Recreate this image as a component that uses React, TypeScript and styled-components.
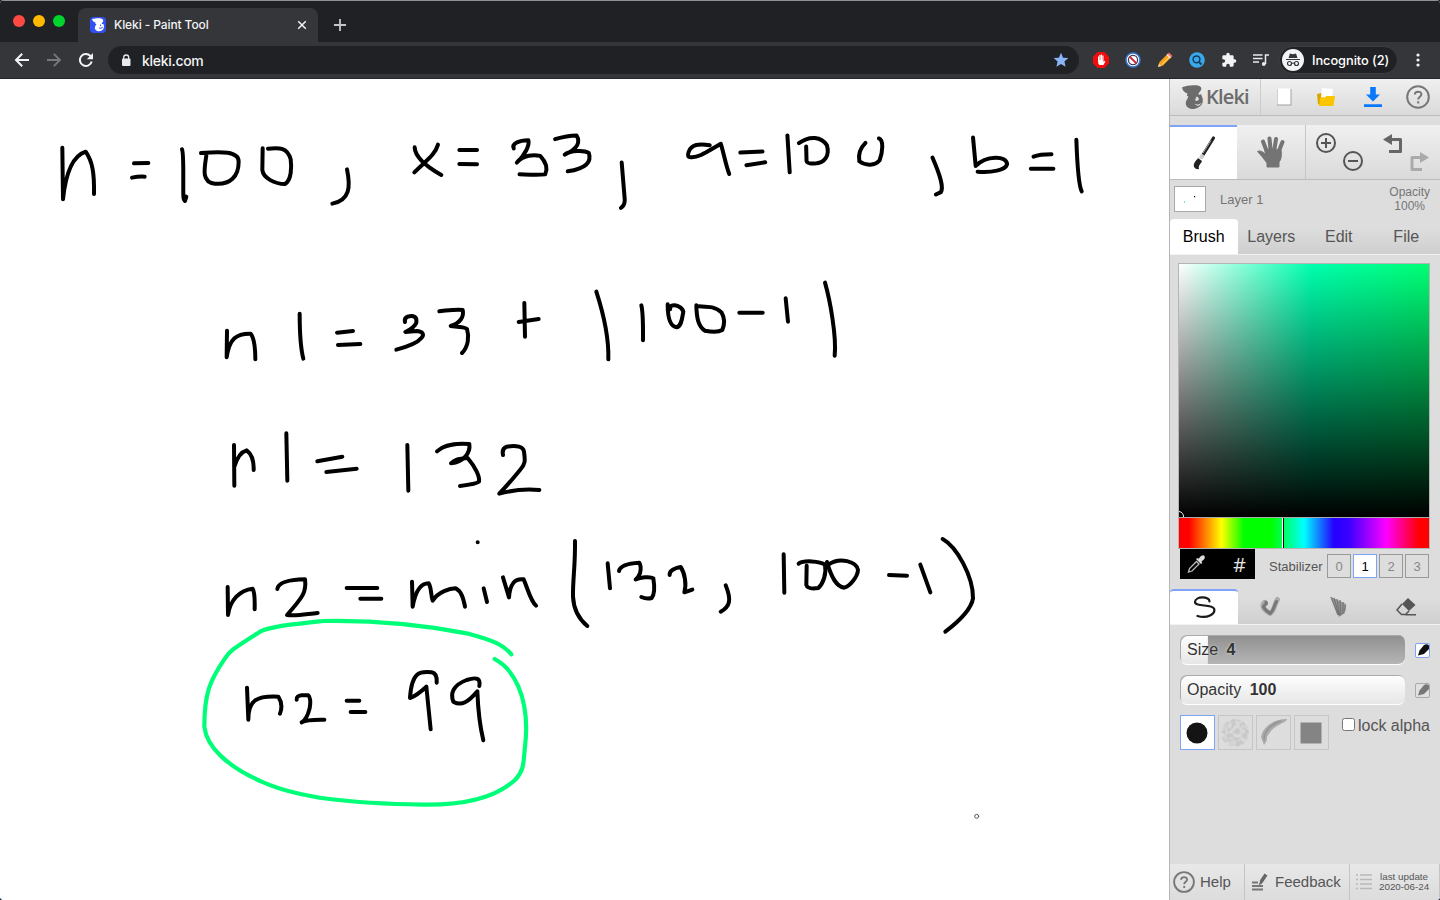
import React from "react";
import styled, { createGlobalStyle, css } from "styled-components";

const Global = createGlobalStyle`
  *, *::before, *::after { box-sizing: border-box; }
  html, body { margin: 0; padding: 0; background: #10222f; overflow: hidden; }
  svg { display: block; flex: none; }
`;

/* ---------- window ---------- */

const Window = styled.div`
  display: flex;
  flex-direction: column;
  width: 1440px;
  height: 900px;
  overflow: hidden;
  border-radius: 4px;
  background: #fff;
`;

const TabStrip = styled.div`
  display: flex;
  align-items: flex-end;
  height: 42px;
  flex: none;
  background: #202124;
  border-top: 1px solid #8f9193;
`;

const Lights = styled.div`
  display: flex;
  gap: 8px;
  padding: 0 0 15px 13px;
  width: 78px;
`;

const Light = styled.span<{ $color: string }>`
  width: 12px;
  height: 12px;
  border-radius: 50%;
  background: ${(p) => p.$color};
`;

const BrowserTab = styled.div`
  display: flex;
  align-items: center;
  width: 240px;
  height: 34px;
  padding: 0 11px 1px 12px;
  border-radius: 8px 8px 0 0;
  background: #35363a;
  color: #f1f3f4;
  font: 500 12px Inter, sans-serif;
`;

const TabTitle = styled.span`
  flex: 1;
  margin-left: 8px;
  letter-spacing: -0.1px;
  white-space: nowrap;
`;

const NewTab = styled.div`
  padding: 0 0 11px 16px;
`;

const NavBar = styled.div`
  display: flex;
  align-items: center;
  height: 37px;
  flex: none;
  background: #35363a;
  border-bottom: 1px solid #242528;
  padding-left: 14px;
`;

const NavButtons = styled.div`
  display: flex;
  gap: 16px;
  width: 94px;
`;

const AddressBar = styled.div`
  display: flex;
  align-items: center;
  width: 971px;
  height: 28px;
  padding: 0 10px 0 12px;
  border-radius: 14px;
  background: #202124;
  color: #f1f3f4;
  font: 500 14px Inter, sans-serif;
`;

const Url = styled.span`
  flex: 1;
  margin-left: 10px;
  letter-spacing: -0.3px;
`;

const Extensions = styled.div`
  display: flex;
  gap: 16px;
  margin-left: 14px;
`;

const Incognito = styled.div`
  display: flex;
  align-items: center;
  gap: 8px;
  width: 119px;
  height: 28px;
  margin-left: 10px;
  padding-left: 2px;
  border-radius: 14px;
  border: 1px solid #3c3d41;
  background: #202124;
  color: #fff;
  font: 500 12.8px Inter, sans-serif;
  letter-spacing: -0.05px;
  white-space: nowrap;
`;

const MenuDots = styled.div`
  margin-left: 18px;
`;

const Page = styled.div`
  display: flex;
  flex: 1;
  min-height: 0;
`;

const Canvas = styled.div`
  width: 1169px;
  background: #fff;
`;

/* ---------- side panel ---------- */

const Panel = styled.aside`
  display: flex;
  flex-direction: column;
  width: 271px;
  border-left: 1px solid #b5b5b5;
  background: #ddd;
  color: #555;
  font-family: "Liberation Sans", Arial, sans-serif;
`;

const raised = css`
  background: linear-gradient(#f0f0f0, #dadada);
`;

const Header = styled.div`
  ${raised}
  display: flex;
  height: 37px;
  flex: none;
  border-bottom: 1px solid #bcbcbc;
`;

const Brand = styled.div`
  display: flex;
  align-items: center;
  gap: 3px;
  width: 91px;
  padding-left: 12px;
  border-right: 1px solid #ccc;
  color: #6c6c6c;
  font: 600 20px/36px "Open Sans", sans-serif;
  letter-spacing: -0.8px;
`;

const HeaderCell = styled.div<{ $w: number }>`
  display: flex;
  align-items: center;
  justify-content: center;
  width: ${(p) => p.$w}px;
`;

const Tools = styled.div`
  ${raised}
  display: flex;
  height: 55px;
  flex: none;
  margin-top: 9px;
  border-bottom: 1px solid #bcbcbc;
`;

const Tool = styled.div<{ $w: number; $active?: boolean; $divider?: boolean }>`
  display: flex;
  align-items: center;
  justify-content: center;
  width: ${(p) => p.$w}px;
  ${(p) => p.$active && "background: #fff; border-top: 2px solid #7fa4f5;"}
  ${(p) => p.$divider && "border-right: 1px solid #c6c6c6;"}
`;

const LayerRow = styled.div`
  display: flex;
  align-items: center;
  height: 39px;
  flex: none;
  padding: 0 10px 0 4px;
  color: #757575;
  font-size: 13px;
`;

const Thumb = styled.div`
  width: 32px;
  height: 26px;
  margin: -2px 14px 0 0;
  border: 1px solid #aaa;
  background: #fff;
`;

const LayerOpacity = styled.div`
  margin: -2px 0 0 auto;
  text-align: center;
  font-size: 12px;
  line-height: 14px;
`;

const TabRow = styled.div<{ $gap?: number }>`
  display: flex;
  height: 36px;
  flex: none;
  margin-top: ${(p) => p.$gap ?? 0}px;
  border-bottom: 1px solid #f2f2f2;
  background: linear-gradient(#ddd 25%, #cfcfcf);
`;

const PanelTab = styled.div<{ $active?: boolean; $accent?: boolean }>`
  display: flex;
  align-items: center;
  justify-content: center;
  width: 67.5px;
  font-size: 16px;
  color: ${(p) => (p.$active ? "#000" : "#555")};
  ${(p) => p.$active && "background: #fff; border-radius: 4px 4px 0 0;"}
  ${(p) => p.$accent && "border-top: 2px solid #7fa4f5;"}
`;

const Picker = styled.div`
  width: 252px;
  margin: 8px 0 0 8px;
  border: 1px solid #b5b5b5;
`;

const Shade = styled.div`
  display: flex;
  align-items: flex-end;
  height: 253px;
  background: linear-gradient(rgba(0, 0, 0, 0), #000),
    linear-gradient(to right, #fff, #00ffae 53%, #00ff73);
`;

const Hue = styled.div`
  display: flex;
  height: 31px;
  padding-left: 103px;
  border-top: 1px solid #aaa;
  background: linear-gradient(
    to right,
    #f00 4%, #ff0 17%, #0f0 26%, #0f0 37%, #0ff 50%, #2400ff 62%, #3a00ff 68%, #f0f 83%, #f00 96%
  );
`;

const HueMark = styled.div`
  width: 2px;
  border-left: 1px solid #fff;
  background: #000;
`;

const PickRow = styled.div`
  display: flex;
  align-items: center;
  height: 30px;
  flex: none;
  margin-left: 10px;
`;

const ColorBox = styled.div`
  display: flex;
  align-items: center;
  justify-content: space-between;
  width: 75px;
  height: 30px;
  padding: 0 9px 0 6px;
  background: #000;
  color: #e4e4e4;
  font: 400 20px "Open Sans", sans-serif;
`;

const StabilizerLabel = styled.span`
  margin: 4px 5px 0 14px;
  width: 53px;
  font-size: 13px;
  white-space: nowrap;
`;

const Steps = styled.div`
  display: flex;
  gap: 2px;
  padding-top: 4px;
`;

const Step = styled.div<{ $active?: boolean }>`
  width: 24px;
  height: 24px;
  border: 1px solid ${(p) => (p.$active ? "#7fa4f5" : "#999")};
  background: ${(p) => (p.$active ? "#fff" : "transparent")};
  color: ${(p) => (p.$active ? "#000" : "#888")};
  font-size: 13px;
  line-height: 23px;
  text-align: center;
`;

const Settings = styled.div`
  display: flex;
  flex-direction: column;
  gap: 10px;
  flex: 1;
  padding: 10px 10px 0;
`;

const SliderRow = styled.div`
  display: flex;
  align-items: center;
  justify-content: space-between;
  height: 30px;
`;

const Slider = styled.div<{ $fill: number }>`
  width: 225px;
  height: 30px;
  padding-left: 7px;
  border-radius: 7px;
  border-bottom: 1px solid #fff;
  box-shadow: inset 1px 1px 0 #aaa;
  background: linear-gradient(#fff, #e6e6e6) 0 0 / ${(p) => p.$fill}% 100% no-repeat,
    linear-gradient(#909090, #b5b5b5);
  color: #333;
  font-size: 16px;
  line-height: 30px;
  text-shadow: 0 0 3px rgba(255, 255, 255, 0.6);

  b { margin-left: 4px; }
`;

const Pressure = styled.div<{ $on?: boolean }>`
  display: flex;
  align-items: center;
  justify-content: center;
  width: 15px;
  height: 15px;
  border: 1px solid ${(p) => (p.$on ? "#7fa4f5" : "#aaa")};
  border-radius: 2px;
  background: ${(p) => (p.$on ? "#fff" : "#e0e0e0")};
`;

const TipRow = styled.div`
  display: flex;
  gap: 3px;
`;

const Tip = styled.div<{ $active?: boolean }>`
  display: flex;
  align-items: center;
  justify-content: center;
  width: 35px;
  height: 35px;
  border: 1px solid ${(p) => (p.$active ? "#7fa4f5" : "#c6c6c6")};
  background: ${(p) => (p.$active ? "#fff" : "transparent")};
`;

const LockAlpha = styled.label`
  display: flex;
  gap: 3px;
  margin: 1px 0 0 10px;
  font-size: 16px;
  line-height: 19px;
  white-space: nowrap;
`;

const Box = styled.span`
  width: 13px;
  height: 13px;
  margin-top: 2px;
  border: 1px solid #767676;
  border-radius: 2.5px;
  background: #fff;
`;

const Footer = styled.div`
  display: flex;
  height: 36px;
  flex: none;
  background: linear-gradient(#e8e8e8, #dcdcdc);
`;

const FooterCell = styled.div<{ $w: number; $small?: boolean }>`
  display: flex;
  align-items: center;
  gap: ${(p) => (p.$small ? 7 : 5)}px;
  width: ${(p) => p.$w}px;
  padding-left: ${(p) => (p.$small ? 6 : 3)}px;
  border-right: 1px solid #c4c4c4;
  color: #555;
  font-size: ${(p) => (p.$small ? 9.8 : 15)}px;
  line-height: ${(p) => (p.$small ? "10px" : "36px")};
  text-align: center;
  white-space: nowrap;
`;

/* ---------- drawing on the canvas ---------- */

type Sheet = { x: number; y: number; sx: number; sy: number; strokes: string[] };

const sheets: Sheet[] = [
  {
    x: 40, y: 120, sx: 3, sy: 3,
    strokes: [
      "M67 83L69 238C75 180 90 110 137 95C158 125 163 160 162 222",
      "M282 130L325 129M276 173Q295 169 314 170",
      "M426 88C432 100 429 170 430 225Q430 240 435 243L439 230",
      "M483 99C545 95 596 93 596 125C596 170 570 195 525 191C485 188 492 150 499 107",
      "M668 85L667 150C670 175 705 192 735 192C755 180 755 140 752 118C742 82 720 83 684 86",
      "M921 148C932 200 930 240 877 251",
      "M1124 82C1125 110 1160 140 1204 165M1194 74C1185 105 1160 120 1123 157",
      "M1258 90H1311M1258 132L1311 133",
    ],
  },
  {
    x: 500, y: 120, sx: 2.613, sy: 2.98,
    strokes: [
      "M36 85C30 70 50 60 74 60C78 75 65 105 44 127C60 103 90 103 105 107C120 125 125 145 118 162C100 165 75 163 51 162",
      "M144 57Q175 46 200 46C210 65 205 85 169 103C185 90 220 90 232 98C240 125 225 145 177 153",
      "M318 127L326 238Q326 255 316 262",
      "M548 75C520 70 500 72 493 95C490 105 490 112 500 111C520 112 540 95 577 71C585 100 590 135 599 161",
      "M628 97L686 94M644 135L693 126",
      "M751 46L757 156",
      "M781 69C810 45 840 50 854 75C862 105 850 128 822 130Q802 130 801 122L800 79",
      "M955 68C940 85 936 105 939 123C955 137 980 137 992 120C1000 95 1003 60 990 55",
      "M1130 112C1150 165 1160 200 1152 215L1139 222",
      "M1236 52L1243 137C1270 105 1325 105 1325 132C1320 150 1285 157 1248 154",
      "M1394 109Q1410 102 1441 102M1387 145H1446",
      "M1506 59Q1510 190 1520 213",
    ],
  },
  {
    x: 200, y: 270, sx: 3, sy: 3,
    strokes: [
      "M81 182L80 262C88 205 110 190 152 191C163 205 166 235 166 268",
      "M299 131C299 180 302 235 310 266",
      "M411 188L459 183M414 225L481 222",
      "M615 156Q612 145 623 140C640 135 652 140 649 158Q643 173 616 186L650 183C685 185 675 217 589 239",
      "M718 124C740 120 780 118 788 120C793 140 780 160 752 168C770 170 795 170 801 177C808 200 805 230 786 249",
      "M973 99L975 200M956 156L1016 147",
      "M102 525L103 647M103 590C112 560 125 545 140 541C155 552 162 570 161 600",
      "M259 490L262 632",
      "M352 574L427 560M379 606L470 596",
      "M622 525L625 662",
      "M711 544C730 525 770 519 808 522C812 550 790 575 753 580C765 567 775 567 803 564C825 590 840 620 837 635Q830 642 780 648",
      "M909 555Q905 535 920 530C950 525 970 530 972 545C975 570 978 580 960 600Q930 637 898 671C930 662 975 656 1018 660",
    ],
  },
  {
    x: 500, y: 270, sx: 3, sy: 3,
    strokes: [
      "M289 65C310 130 327 200 325 268",
      "M424 106C430 130 429 170 429 211",
      "M503 103C503 140 510 170 530 172C545 168 546 145 550 125C545 108 525 103 512 108L510 118",
      "M589 106C590 145 595 170 615 182C635 186 655 187 667 180C677 155 672 140 665 128C645 108 620 110 597 109",
      "M718 128H788",
      "M857 85L864 155",
      "M975 38C990 90 1010 200 1004 257",
    ],
  },
  {
    x: 190, y: 530, sx: 3, sy: 3,
    strokes: [
      "M113 171L114 255C120 210 150 180 188 176C196 190 194 220 194 238",
      "M262 177C265 155 300 149 345 148C350 185 340 200 291 255C320 259 350 252 383 249",
      "M470 174H562M511 206H574",
      "M666 155L668 230C675 190 690 160 716 160C725 175 722 195 728 212C745 185 780 175 797 175C815 185 820 205 825 230",
      "M881 175L891 216M863 37h0.1",
      "M939 142L957 202C960 160 975 145 1001 148C1015 180 1020 210 1038 227",
      "M171 473L175 569C175 510 200 497 265 500C275 515 276 535 270 551",
      "M320 509Q318 498 335 496H355Q364 505 359 535Q350 570 335 577Q350 568 403 569",
      "M470 512H508M482 546H526",
      "M740 458Q742 430 725 427C690 423 665 425 660 504Q680 497 709 470L722 598",
      "M868 468C872 445 860 440 830 450C790 465 780 490 790 515C815 530 835 515 862 484C865 560 870 590 880 631",
    ],
  },
  {
    x: 560, y: 530, sx: 3, sy: 3,
    strokes: [
      "M45 33C46 110 38 150 39 200C41 240 60 270 82 288",
      "M143 100L150 175",
      "M177 123C180 108 200 100 238 98Q245 110 240 130Q235 143 227 148C240 143 270 138 280 145C285 175 282 195 275 204Q260 208 244 201",
      "M329 135Q327 118 362 111C375 130 380 165 373 187L397 179",
      "M497 166C515 210 510 230 482 245",
      "M671 73L673 188",
      "M716 101C730 90 780 93 795 104C800 130 790 160 775 174C755 177 742 175 739 165L740 107",
      "M801 96C815 145 830 170 853 173C870 168 893 140 894 120C890 95 840 80 806 103",
      "M987 135L1041 137",
      "M1081 104L1111 187",
      "M1148 27C1190 50 1240 140 1239 205C1235 230 1215 260 1156 305",
    ],
  },
];

const ring =
  "M964 373C940 345 915 333 830 310C700 285 560 270 400 273C290 285 240 290 210 305C140 350 120 360 105 385C60 450 43 490 43 590C50 650 110 710 220 757C330 805 480 820 700 824C830 826 920 800 975 750C1005 720 1000 690 1005 650C1015 570 1005 480 955 420Q940 402 914 387";

const Drawing = () => (
  <svg width="1169" height="821" viewBox="0 79 1169 821" fill="none" strokeLinecap="round" strokeLinejoin="round">
    {sheets.map((s, i) => (
      <g key={i} transform={`translate(${s.x} ${s.y}) scale(${1 / s.sx} ${1 / s.sy})`} stroke="#000" strokeWidth="4">
        {s.strokes.map((d, j) => (
          <path key={j} d={d} vectorEffect="non-scaling-stroke" />
        ))}
      </g>
    ))}
    <path d={ring} transform="translate(190 530) scale(0.33333)" stroke="#00ff78" strokeWidth="12.5" />
    <circle cx="976.7" cy="816.3" r="2" stroke="#555" strokeWidth="1" />
  </svg>
);

/* ---------- icons ---------- */

const Swirl = ({ w, h, color, face }: { w: number; h: number; color: string; face: string }) => (
  <svg width={w} height={h} viewBox="0 0 21 24">
    <path
      d="M0 2.3C4 1 8 0 13 .3c4 .2 6.500 1.200 6.300 3.700C19.200 6 17 7 16.300 9c.7 1 2.200 1 2.700 0l1.500 4c.5 2 .5 4-.5 6-2 3.500-6 5-10 5-5-.5-7-4-6-7.500.8-2.500 2.100-3.500 2.500-5C5 11.500 4.500 10.500 5.500 8.500 3 8 .5 6 0 2.300z"
      fill={color}
    />
    <path d="M14.500 11.500c1 .3 2 .8 2.500 2.500-.7 2-2.500 2.500-3.700 1.500-.2-1.500.7-2.500 1.200-4zM12.500 18.500c2 1.600 5 1.200 7-.8-1.500 3.500-5 4-7 .8z" fill={face} />
  </svg>
);

const Help = ({ size }: { size: number }) => (
  <svg width={size} height={size} viewBox="0 0 24 24" fill="none" stroke="#777" strokeWidth="2">
    <circle cx="12" cy="12" r="10.8" />
    <path d="M8.8 9.6c0-4 6.6-3.8 6.6-.3 0 2.5-3.2 2.4-3.2 5.1" />
    <path d="M12.2 16.3v2.2" />
  </svg>
);

const PenTip = ({ color }: { color: string }) => (
  <svg width="13" height="13" viewBox="0 0 13 13">
    <path d="M2 11.5L3.5 6.5 8 1Q11-.5 13 1.500V5L8 10z" fill={color} />
  </svg>
);

const App = () => (
  <>
    <Global />
    <Window>
      <TabStrip>
        <Lights>
          <Light $color="#ff4a43" />
          <Light $color="#ffb900" />
          <Light $color="#00d42d" />
        </Lights>
        <BrowserTab>
          <svg width="16" height="16" viewBox="0 0 16 16">
            <rect width="16" height="16" rx="4" fill="#3350f5" />
            <path d="M2 2C5 1.500 7 1 10 1.200c2.500.3 3.500 1.500 3.200 3-.4 1.200-1.400 1.600-1.600 2.500.6.600 1.400.500 1.700 0 1.700 4 .2 7-4.300 7.600C6 14.300 4.300 12 5 9.800c.4-1.200 1.200-2 1.400-2.800C5.500 7 5 6.500 5.500 5.500 3.800 5.200 2.500 4 2 2z" fill="#fff" />
            <path d="M9 11q2 .8 3.800-.6M10.600 7.600v1.500" stroke="#3350f5" fill="none" />
          </svg>
          <TabTitle>Kleki - Paint Tool</TabTitle>
          <svg width="10" height="10" viewBox="0 0 10 10" stroke="#f1f3f4" strokeWidth="1.5">
            <path d="M1.200 1.200l7.600 7.600M8.800 1.200l-7.600 7.600" />
          </svg>
        </BrowserTab>
        <NewTab>
          <svg width="12" height="12" viewBox="0 0 12 12" stroke="#c4c7ca" strokeWidth="1.800">
            <path d="M6 0v12M0 6h12" />
          </svg>
        </NewTab>
      </TabStrip>

      <NavBar>
        <NavButtons>
          <svg width="16" height="16" viewBox="0 0 16 16" fill="none" stroke="#f1f3f4" strokeWidth="2">
            <path d="M15 8H2.500M8.200 1.800L2 8l6.200 6.200" />
          </svg>
          <svg width="16" height="16" viewBox="0 0 16 16" fill="none" stroke="#77797d" strokeWidth="1.800">
            <path d="M1 8h12.500M7.800 1.800L14 8l-6.200 6.200" />
          </svg>
          <svg width="16" height="16" viewBox="0 0 16 16" fill="none" stroke="#f1f3f4" strokeWidth="2">
            <path d="M13.700 9.500A6 6 0 1 1 12.200 3.800L13.500 5.200" />
            <path d="M15 1v6.300H8.800z" fill="#f1f3f4" stroke="none" />
          </svg>
        </NavButtons>
        <AddressBar>
          <svg width="12" height="13" viewBox="0 0 12 13">
            <rect x="2" y="4.500" width="8.500" height="7.500" rx="1" fill="#e8eaed" />
            <path d="M3.700 5V3.500a2.500 2.500 0 0 1 5 0V5" fill="none" stroke="#e8eaed" strokeWidth="1.300" />
          </svg>
          <Url>kleki.com</Url>
          <svg width="16" height="16" viewBox="0 0 16 16" fill="#8ab4f8">
            <path d="M8 .8l2.100 4.900 5.300.4-4 3.500 1.200 5.200L8 12l-4.600 2.800 1.200-5.200-4-3.500 5.300-.4z" />
          </svg>
        </AddressBar>
        <Extensions>
          <svg width="16" height="16" viewBox="0 0 16 16">
            <path d="M4.700 0h6.600L16 4.700v6.600L11.300 16H4.700L0 11.300V4.700z" fill="#f20d0d" />
            <path d="M5 9V4.500h1V8h.3V3h1.200v5h.3V2.500H9V8h.3V3.500h1.200V10l1.300-1.300.6.8-2 3.500H6.500Q5 12 5 9z" fill="#fff" />
          </svg>
          <svg width="16" height="16" viewBox="0 0 16 16">
            <circle cx="8" cy="8" r="7" fill="#fff" stroke="#2f7bd0" strokeWidth="1.500" />
            <circle cx="8" cy="8" r="4.600" fill="#fff" stroke="#4a3a5a" strokeWidth="1.300" />
            <path d="M4.500 4.500l7 7" stroke="#cb2638" strokeWidth="1.800" />
          </svg>
          <svg width="16" height="16" viewBox="0 0 16 16">
            <path d="M1 15l1.500-5L11 1.500 14.500 5 6 13.500z" fill="#f9a01b" />
            <path d="M5 12.500L13 4.500" stroke="#ffc94d" strokeWidth="1.500" />
            <path d="M10 2.500L12 .5 15.500 4l-2 2z" fill="#f37065" />
            <path d="M10 2.500l3.500 3.500" stroke="#eee" strokeWidth="1.200" />
            <path d="M1 15l1-3.500L4.500 14z" fill="#ead1a6" />
          </svg>
          <svg width="16" height="16" viewBox="0 0 16 16" fill="none">
            <circle cx="8" cy="8" r="7.800" fill="#39a9ea" />
            <circle cx="7.500" cy="7.300" r="3.400" stroke="#143c5d" strokeWidth="1.500" />
            <path d="M10 10l2.500 2.500" stroke="#143c5d" strokeWidth="1.800" />
          </svg>
          <svg width="16" height="16" viewBox="0 0 24 24" fill="#f1f3f4">
            <path d="M20.500 11H19V7c0-1.100-.9-2-2-2h-4V3.500a2.500 2.500 0 0 0-5 0V5H4c-1.100 0-2 .9-2 2v3.800h1.500a2.700 2.700 0 0 1 0 5.400H2V20c0 1.100.9 2 2 2h3.800v-1.500a2.700 2.700 0 0 1 5.400 0V22H17c1.100 0 2-.9 2-2v-4h1.500a2.500 2.500 0 0 0 0-5z" />
          </svg>
          <svg width="16" height="16" viewBox="0 0 16 16" fill="none" stroke="#e8eaed" strokeWidth="1.500">
            <path d="M0 3h9.500M0 6.500h9.500M0 10h6M12.500 12V3H16" />
            <circle cx="10.800" cy="12" r="1.900" fill="#e8eaed" stroke="none" />
          </svg>
        </Extensions>
        <Incognito>
          <svg width="22" height="22" viewBox="0 0 22 22">
            <circle cx="11" cy="11" r="11" fill="#f1f3f4" />
            <path d="M6.500 9L8 4.500l3 .7 3-.7L15.500 9z" fill="#35363a" />
            <path d="M4 10.500h14" stroke="#35363a" strokeWidth="1.200" />
            <g fill="none" stroke="#35363a" strokeWidth="1.200">
              <circle cx="7.500" cy="14.500" r="2" />
              <circle cx="14.500" cy="14.500" r="2" />
              <path d="M9.500 14.500q1.500-1 3 0" />
            </g>
          </svg>
          <span>Incognito (2)</span>
        </Incognito>
        <MenuDots>
          <svg width="4" height="14" viewBox="0 0 4 14" fill="#f1f3f4">
            <circle cx="2" cy="2" r="1.600" />
            <circle cx="2" cy="7" r="1.600" />
            <circle cx="2" cy="12" r="1.600" />
          </svg>
        </MenuDots>
      </NavBar>

      <Page>
        <Canvas>
          <Drawing />
        </Canvas>
        <Panel>
          <Header>
            <Brand>
              <Swirl w={21} h={24} color="#6c6c6c" face="#e0e0e0" />
              Kleki
            </Brand>
            <HeaderCell $w={45}>
              <svg width="16" height="20" viewBox="0 0 16 20">
                <path d="M1 2h14.500v16.500H1z" fill="#a0a0a0" />
                <path d="M1.500 1.500h13v16h-13z" fill="#fff" />
              </svg>
            </HeaderCell>
            <HeaderCell $w={40}>
              <svg width="18" height="20" viewBox="0 0 18 20">
                <path d="M0 7l5-1v13L1 17z" fill="#d9a400" />
                <path d="M5 1l11 1-1 10-11-2z" fill="#fff" />
                <path d="M2 19L3 10.500h4.500l2-1.500H18l-1.500 10z" fill="#fbc500" />
              </svg>
            </HeaderCell>
            <HeaderCell $w={53}>
              <svg width="18" height="20" viewBox="0 0 18 20" fill="#0a78fa">
                <path d="M6.200 0h5.600v7.500H16L9 14.500 2 7.500h4.200zM0 17.200h18V20H0z" />
              </svg>
            </HeaderCell>
            <HeaderCell $w={38}>
              <Help size={24} />
            </HeaderCell>
          </Header>

          <Tools>
            <Tool $w={67} $active>
              <svg width="24" height="36" viewBox="0 0 24 36">
                <path d="M21.500 3L10 21.500" stroke="#222" strokeWidth="3.200" strokeLinecap="round" />
                <path d="M19 5.500L11 18" stroke="#aaa" strokeWidth="1" />
                <path d="M11 19.500l-2.500 4" stroke="#ccc" strokeWidth="3.500" />
                <path d="M6 23l4 3c-1 3-4 4-3 8-4 1-7-3-4-7 1-2 2-2 3-4z" fill="#222" />
              </svg>
            </Tool>
            <Tool $w={69} $divider>
              <svg width="30" height="34" viewBox="0 0 30 34" fill="#747474" stroke="#747474" strokeLinecap="round">
                <path d="M11 17L7 6.500M14.500 14L13.500 3.500M18.500 14l1.500-10M22.500 17l4-10" strokeWidth="4" />
                <path d="M9 14L25 15C26 20 25 25 23 27V32H11V28C8 24 5 20 1.500 16.500 4 15 7 17 9.500 19z" strokeWidth="1" />
              </svg>
            </Tool>
            <Tool $w={66}>
              <svg width="48" height="40" viewBox="0 0 48 40" fill="none" stroke="#555" strokeWidth="2">
                <circle cx="11" cy="11" r="9" />
                <path d="M6 11h10M11 6v10" />
                <circle cx="38" cy="29" r="9" />
                <path d="M33 29h10" />
              </svg>
            </Tool>
            <Tool $w={68}>
              <svg width="46" height="40" viewBox="0 0 46 40" fill="none" strokeWidth="3">
                <path d="M8 7.500H17.500V19.500H6" stroke="#666" strokeLinejoin="round" />
                <path d="M0 7.500L9 2v11z" fill="#666" />
                <path d="M38 25.500H29V37.500H39" stroke="#aaa" strokeLinejoin="round" />
                <path d="M46 25.500L37 20v11z" fill="#aaa" />
              </svg>
            </Tool>
          </Tools>

          <LayerRow>
            <Thumb>
              <svg width="30" height="24" viewBox="0 0 30 24">
                <path d="M19 9h1.200v1.200H19z" fill="#000" />
                <path d="M9 14.500h1v1H9z" fill="#00c864" />
              </svg>
            </Thumb>
            <span>Layer 1</span>
            <LayerOpacity>
              Opacity
              <br />
              100%
            </LayerOpacity>
          </LayerRow>

          <TabRow>
            <PanelTab $active>Brush</PanelTab>
            <PanelTab>Layers</PanelTab>
            <PanelTab>Edit</PanelTab>
            <PanelTab>File</PanelTab>
          </TabRow>

          <Picker>
            <Shade>
              <svg width="6" height="7" viewBox="0 0 6 7" fill="none" stroke="#eee">
                <path d="M0 1.500A5 5 0 0 1 4.500 7" />
              </svg>
            </Shade>
            <Hue>
              <HueMark />
            </Hue>
          </Picker>
          <PickRow>
            <ColorBox>
              <svg width="20" height="20" viewBox="0 0 20 20">
                <path d="M2.500 18L3.500 14.500 10.500 7.500 13 10 6 17z" fill="none" stroke="#bbb" strokeWidth="1.300" />
                <path d="M10 5l1.500-1 1 .8L15 2q2.500-1.500 3.500 0 1 2-.6 3.500L15.500 7.500l.8 1.200L15 10z" fill="#ddd" />
              </svg>
              #
            </ColorBox>
            <StabilizerLabel>Stabilizer</StabilizerLabel>
            <Steps>
              <Step>0</Step>
              <Step $active>1</Step>
              <Step>2</Step>
              <Step>3</Step>
            </Steps>
          </PickRow>

          <TabRow $gap={10}>
            <PanelTab $active $accent>
              <svg width="24" height="24" viewBox="0 0 24 24" fill="none" stroke="#1a1a1a" strokeWidth="2.200" strokeLinecap="round">
                <path d="M17.500 5.500C18 0 3 0 3 6 3 11 20 8 22 12.500 24 18 15 23 5.500 20" />
              </svg>
            </PanelTab>
            <PanelTab>
              <svg width="24" height="24" viewBox="0 0 24 24" fill="none" strokeLinecap="round" strokeLinejoin="round">
                <path d="M5.500 7.500C1 12 7 16 11 18.500c5-3 4-9 7.500-14" stroke="#aaa" strokeWidth="5" />
                <path d="M7 7C9 10 5 9 4.500 12 6 15 9 17 11 18.500c4-3 4-8 6.500-12" stroke="#777" strokeWidth="3" />
              </svg>
            </PanelTab>
            <PanelTab>
              <svg width="20" height="24" viewBox="0 0 20 24" fill="none" stroke="#777">
                <path d="M2 2L17 9 16 18 10 22z" fill="#999" stroke="none" />
                <path d="M2 2l7 18M5 3l5 17M8 4l3 17M11 5l1 15M14 7v12M16.500 10l-1 6" strokeWidth="1.300" />
              </svg>
            </PanelTab>
            <PanelTab>
              <svg width="20" height="20" viewBox="0 0 20 20">
                <path d="M12 1L19.500 8 13 14 6 7z" fill="#555" />
                <path d="M6 7L1 13l4.500 4.500H9.500L13 14M9.500 17.800H20" fill="none" stroke="#555" strokeWidth="1.500" />
              </svg>
            </PanelTab>
          </TabRow>

          <Settings>
            <SliderRow>
              <Slider $fill={12.4}>
                Size <b>4</b>
              </Slider>
              <Pressure $on>
                <PenTip color="#111" />
              </Pressure>
            </SliderRow>
            <SliderRow>
              <Slider $fill={100}>
                Opacity <b>100</b>
              </Slider>
              <Pressure>
                <PenTip color="#777" />
              </Pressure>
            </SliderRow>
            <TipRow>
              <Tip $active>
                <svg width="22" height="22" viewBox="0 0 22 22">
                  <circle cx="11" cy="11" r="10.500" fill="#141414" />
                </svg>
              </Tip>
              <Tip>
                <svg width="30" height="30" viewBox="0 0 30 30">
                  <filter id="chalk">
                    <feTurbulence type="fractalNoise" baseFrequency="0.25" numOctaves="3" seed="4" />
                    <feColorMatrix values="0 0 0 0 0.58  0 0 0 0 0.58  0 0 0 0 0.58  2.5 0 0 0 -0.65" />
                    <feComposite in2="SourceGraphic" operator="in" />
                  </filter>
                  <circle cx="15" cy="15" r="14" fill="#999" filter="url(#chalk)" />
                </svg>
              </Tip>
              <Tip>
                <svg width="29" height="29" viewBox="0 0 29 29">
                  <path d="M28 1C14 1 4 9 2 19l3 8c2-3 3-4 3-8C12 10 20 7 27 3z" fill="#aaa" />
                  <path d="M22 3C12 6 5 13 5 22" fill="none" stroke="#959595" strokeWidth="1.500" />
                </svg>
              </Tip>
              <Tip>
                <svg width="22" height="22" viewBox="0 0 22 22">
                  <path d="M.5.500h21v21H.500z" fill="#848484" />
                </svg>
              </Tip>
              <LockAlpha>
                <Box />
                lock alpha
              </LockAlpha>
            </TipRow>
          </Settings>

          <Footer>
            <FooterCell $w={75}>
              <Help size={22} />
              Help
            </FooterCell>
            <FooterCell $w={105}>
              <svg width="22" height="20" viewBox="0 0 22 20" stroke="#777" strokeWidth="2" fill="none">
                <path d="M4 10.500h6M4 14h11M4 17.500h11" />
                <path d="M13 10L18 2.500" stroke="#666" strokeWidth="3.500" />
                <path d="M11.500 12.500l1-3 1.500 1.500z" fill="#666" stroke="#666" strokeWidth="1" />
              </svg>
              Feedback
            </FooterCell>
            <FooterCell $w={90} $small>
              <svg width="16" height="18" viewBox="0 0 16 18" stroke="#b8b8b8" strokeWidth="1.500">
                <path d="M0 2h2M4 2h12M0 6.500h2M4 6.500h12M0 11h2M4 11h12M0 15.500h2M4 15.500h12" />
              </svg>
              <span>
                last update
                <br />
                2020-06-24
              </span>
            </FooterCell>
          </Footer>
        </Panel>
      </Page>
    </Window>
  </>
);

export default App;
